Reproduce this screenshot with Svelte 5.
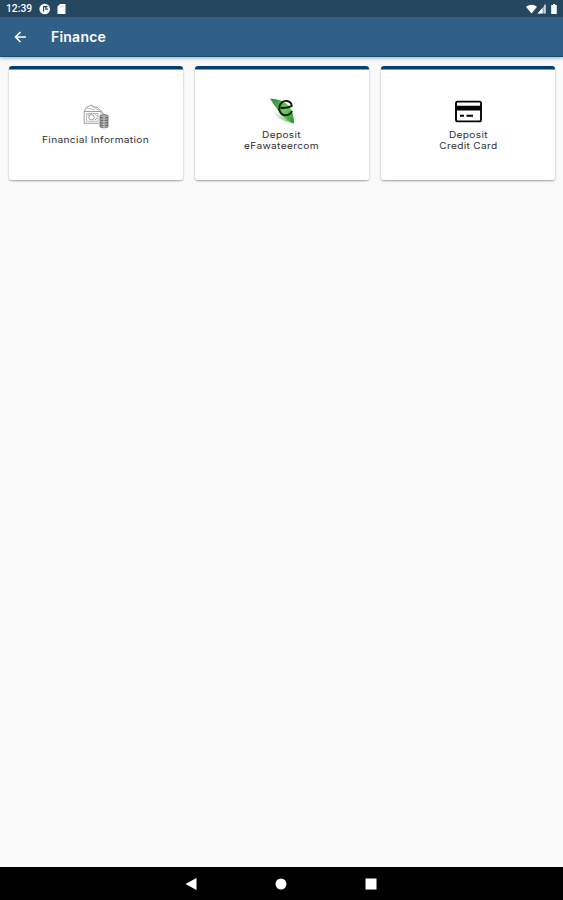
<script lang="ts">
    const cards = [
        { icon: 'money', lines: ['Financial Information'] },
        { icon: 'efawateer', lines: ['Deposit', 'eFawateercom'] },
        { icon: 'card', lines: ['Deposit', 'Credit Card'] },
    ]
</script>

<style>
    :global(body) {
        margin: 0;
        background: #fafafa;
    }
    .screen {
        display: flex;
        flex-direction: column;
        height: 100vh;
        overflow: hidden;
        background: #fafafa;
        font-family: Inter, 'Open Sans', sans-serif;
    }
    svg {
        display: block;
    }
    .status {
        display: flex;
        align-items: center;
        box-sizing: border-box;
        height: 17px;
        padding: 0 5px 0 6px;
        background: #25475f;
        color: #fff;
    }
    .time {
        width: 33px;
        font-family: Roboto, sans-serif;
        font-size: 10.3px;
        font-weight: 500;
        line-height: 17px;
    }
    .system {
        margin-left: auto;
    }
    .toolbar {
        display: flex;
        align-items: center;
        box-sizing: border-box;
        height: 40px;
        padding: 0 13px;
        border-bottom: 1px solid #175170;
        background: #306087;
        box-shadow: 0 1px 4px rgba(40, 85, 130, 0.5);
        color: #fff;
    }
    h1 {
        margin: 0 0 0 24px;
        font-size: 14px;
        font-weight: 600;
        line-height: 20px;
        letter-spacing: 0.22px;
    }
    .cards {
        display: grid;
        grid-template-columns: repeat(3, 1fr);
        flex: 1;
        align-content: start;
        gap: 12px;
        padding: 9px 8px 0 9px;
    }
    .card {
        display: flex;
        flex-direction: column;
        align-items: center;
        justify-content: center;
        box-sizing: border-box;
        height: 114px;
        padding-top: 2px;
        overflow: hidden;
        border-radius: 3px;
        background: linear-gradient(#073f6e 3px, #6f9dbc 3px, #6f9dbc 4px, #fff 4px);
        box-shadow: 0 1px 2px rgba(0, 0, 0, 0.38);
        color: #303030;
        text-align: center;
    }
    .label {
        margin-top: 5px;
        font-size: 8.8px;
        line-height: 11px;
        letter-spacing: 0.3px;
        transform: scaleX(1.15);
    }
    .label span {
        display: block;
    }
    .nav {
        display: flex;
        align-items: center;
        justify-content: center;
        gap: 78px;
        height: 33px;
        padding-right: 1px;
        background: #000;
    }
</style>

<div class="screen">
    <div class="status">
        <span class="time">12:39</span>
        <svg width="28" height="12" viewBox="0 0 28 12">
            <circle cx="5.7" cy="6" r="5.3" fill="#fff" />
            <path d="M4.6 8.5V3.6h4M6.8 3.6v2.6h2.4" fill="none" stroke="#25475f" stroke-width="1.2" />
            <path d="M21 1h5.5v10h-8V3.5z" fill="#fff" />
            <path d="M21.2 2.5v2M23 2.5v2M24.8 2.5v2" stroke="#a9b8c3" stroke-width=".6" />
        </svg>
        <svg class="system" width="33" height="12" viewBox="0 0 33 12">
            <path d="M1 3.7Q6.5-.4 12 3.7L6.5 10.4z" fill="#fff" />
            <path d="M20.5 1.5v9h-8z" fill="#9aabb7" />
            <path d="M17.5 5v5.5h-5z" fill="#fff" />
            <path d="M20 1.5v9" stroke="#fff" />
            <path d="M28 1h2v1h1.8v9h-5.6V2H28z" fill="#fff" />
        </svg>
    </div>
    <div class="toolbar">
        <svg width="14" height="14" viewBox="0 0 14 14" fill="none" stroke="#fff" stroke-width="1.5">
            <path d="M7.5 2L2.5 7l5 5M2.5 7h10.5" />
        </svg>
        <h1>Finance</h1>
    </div>
    <div class="cards">
        {#each cards as card}
            <div class="card">
                {#if card.icon === 'money'}
                    <svg width="26" height="26" viewBox="0 0 26 26" fill="none" stroke="#858585" stroke-width=".8">
                        <path d="M1.2 8.5V20.3H16M1.2 8.5H18v3M1.2 8.5l2-4 5-2.5 3 2 3 .3 5 4.4 1.5 3" />
                        <path d="M3.5 10.5H15v7.8H3.5zM4 5l8 2M8 2.5l8 5" stroke="#aaa" />
                        <circle cx="8.5" cy="14.2" r="2.7" />
                        <path d="M4.5 12h2M12 11.5l2 2M12 17l2-2" />
                        <path d="M17 12.5q4-2 8 0V24q-4 2-8 0z" fill="#aaa" stroke="#686868" />
                        <path d="M17 14.5q4 1.5 8 0M17 17q4 1.5 8 0M17 19.5q4 1.5 8 0M17 22q4 1.5 8 0" stroke="#555" />
                        <path d="M21 13v12" stroke="#ddd" />
                    </svg>
                {:else if card.icon === 'efawateer'}
                    <svg width="26" height="26" viewBox="0 0 26 26">
                        <defs>
                            <linearGradient id="leaf" x1="0" y1="0" x2="1" y2="1">
                                <stop offset="0" stop-color="#23872a" />
                                <stop offset=".55" stop-color="#79c968" />
                                <stop offset="1" stop-color="#238d25" />
                            </linearGradient>
                            <linearGradient id="fade" x1="1" y1="1" x2="0" y2="0">
                                <stop offset="0" stop-color="#67bd59" />
                                <stop offset="1" stop-color="#fff" />
                            </linearGradient>
                        </defs>
                        <path d="M4 13Q7 22 25 25.5L19 16z" fill="url(#fade)" />
                        <path d="M1 .5Q14 1 20.5 8.5 25 15 25 25.5 17 22 12 16 6 9 1 .5z" fill="url(#leaf)" />
                        <path
                            d="M11.5 9.8Q18 10.5 22.8 7.8C22 2.5 15 1.2 11.8 5.5 8 11 11.5 17.5 17 17.2Q21.5 17 23 13"
                            fill="none"
                            stroke="#10200f"
                            stroke-width="1.9"
                        />
                    </svg>
                {:else}
                    <svg width="28" height="26" viewBox="0 0 28 26">
                        <rect x="2" y="3.6" width="25" height="19.8" rx="1.6" fill="#fff" stroke="#050505" stroke-width="1.9" />
                        <path d="M2 10.1h25" stroke="#050505" stroke-width="4.6" />
                        <path d="M6 17.8h4M12.5 17.8H19" stroke="#050505" stroke-width="1.9" />
                    </svg>
                {/if}
                <div class="label">
                    {#each card.lines as line}
                        <span>{line}</span>
                    {/each}
                </div>
            </div>
        {/each}
    </div>
    <div class="nav">
        <svg width="12" height="12" viewBox="0 0 12 12" fill="#fff"><path d="M.5 6L11.5 0v12z" /></svg>
        <svg width="12" height="12" viewBox="0 0 12 12" fill="#fff"><circle cx="6" cy="6" r="5.5" /></svg>
        <svg width="12" height="12" viewBox="0 0 12 12" fill="#fff"><path d="M.5.5h11v11H.5z" /></svg>
    </div>
</div>
